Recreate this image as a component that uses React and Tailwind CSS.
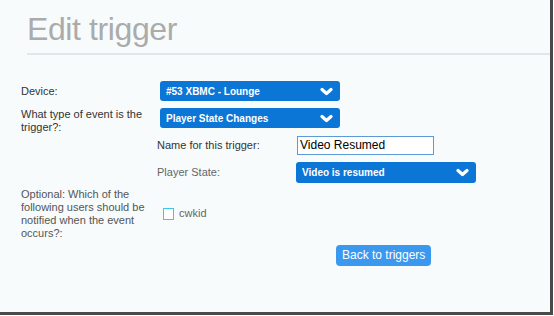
import React from 'react';

/* ── Chevron used on the blue selects ── */
const Chevron = () => (
  <svg width="13" height="9" viewBox="0 0 13 9" className="shrink-0">
    <polyline points="2,2.5 6.5,6.5 11,2.5" fill="none" stroke="#ffffff" strokeWidth="3.2" strokeLinecap="round" strokeLinejoin="round" />
  </svg>
);

const BlueSelect = ({ value, tall }) => (
  <div
    className={`flex w-[180px] items-center justify-between rounded-[3px] bg-[#0b76d6] pl-[6px] pr-[7px] text-[10px] font-bold text-white ${tall ? 'h-[21px]' : 'h-[20px]'}`}
  >
    <span>{value}</span>
    <Chevron />
  </div>
);

export default function App() {
  return (
    <div
      className="h-[316px] w-[554px] overflow-hidden bg-white"
      style={{ fontFamily: "'Liberation Sans', Arial, sans-serif" }}
    >
      <div className="h-[315px] w-[553px] border-b-[3px] border-r-[3px] border-[#4a4a4a] bg-[#f7fbfc]">
        {/* Header */}
        <div className="pl-[27px] pt-[10px]">
          <h1 className="text-[32px] leading-[38px] tracking-[-0.4px] text-[#ababab]">Edit trigger</h1>
          <div className="mt-[5px] h-[2px] bg-[#e1e7e9]" />
        </div>

        {/* Form */}
        <div className="pl-[21px] pt-[26px] text-[11px] leading-[13px] text-[#333]">
          <div className="flex items-center">
            <span className="w-[139px]">Device:</span>
            <BlueSelect value="#53 XBMC - Lounge" />
          </div>

          <div className="mt-[7px] flex items-start">
            <span className="w-[139px]">What type of event is the trigger?:</span>
            <BlueSelect value="Player State Changes" />
          </div>

          <div className="ml-[136px] mt-[2px] flex items-center">
            <span className="w-[140px]">Name for this trigger:</span>
            <div className="flex h-[19px] w-[137px] items-center border border-[#5d9ad8] bg-white px-[2px] text-[12px] text-black">
              Video Resumed
            </div>
          </div>

          <div className="ml-[136px] mt-[7px] flex items-center">
            <span className="w-[139px] text-[#666]">Player State:</span>
            <BlueSelect value="Video is resumed" tall />
          </div>

          <div className="mt-[5px] flex items-start text-[#555]">
            <span className="w-[142px]">Optional: Which of the following users should be notified when the event occurs?:</span>
            <div className="mt-[19px] flex items-center gap-[5px]">
              <span className="h-[12px] w-[11px] border-[1.5px] border-[#3fc6ee] bg-white" />
              <span className="text-[#666]">cwkid</span>
            </div>
          </div>

          <div className="ml-[315px] mt-[5px]">
            <button className="h-[21px] rounded-[4px] bg-[#3b98ef] px-[6px] text-[12px] text-white">Back to triggers</button>
          </div>
        </div>
      </div>
    </div>
  );
}
